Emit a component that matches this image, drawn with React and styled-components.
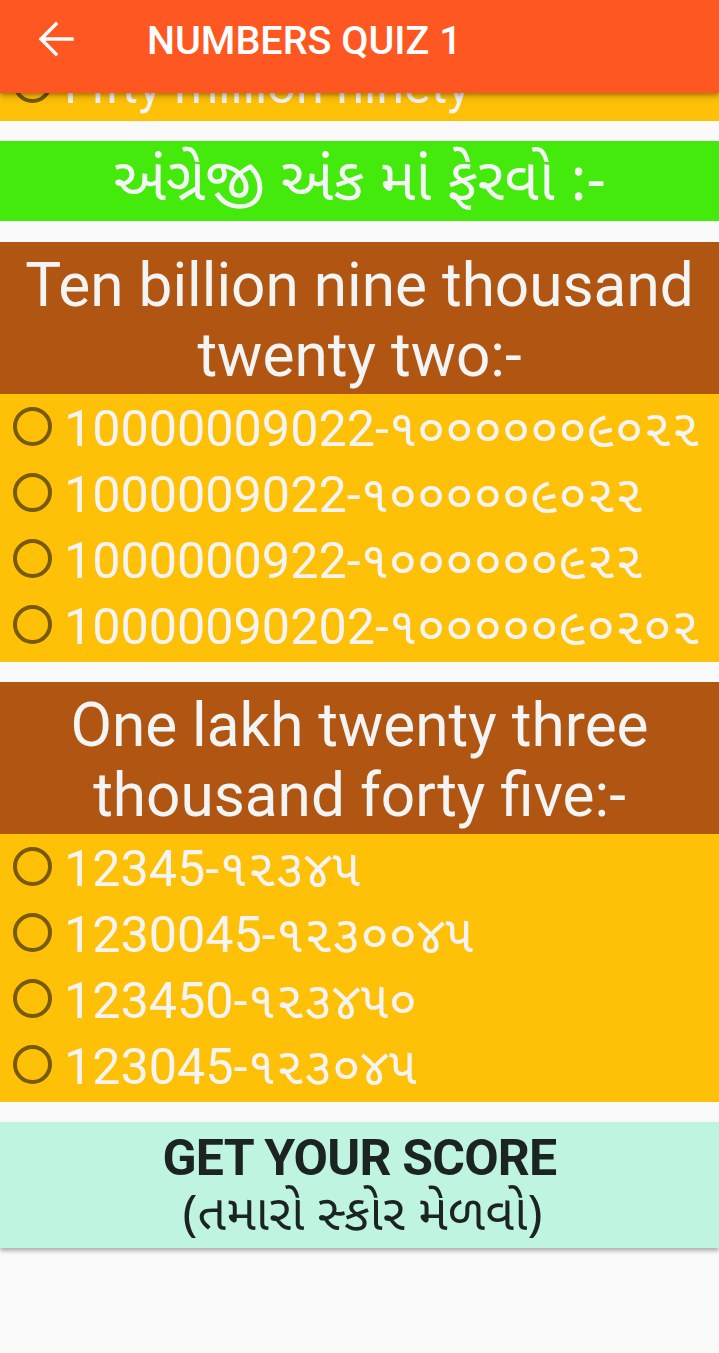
import React from "react";
import styled, { createGlobalStyle } from "styled-components";

const GlobalStyle = createGlobalStyle`
  html, body {
    margin: 0;
    padding: 0;
    background: #fafafa;
  }
  body {
    font-family: Roboto, "Noto Sans Gujarati", "Noto Sans", "DejaVu Sans", sans-serif;
  }
  * { box-sizing: border-box; }
`;

const Screen = styled.div`
  position: relative;
  width: 719px;
  height: 1353px;
  overflow: hidden;
  background: #fafafa;
`;

const AppBar = styled.header`
  position: absolute;
  top: 0;
  left: 0;
  right: 0;
  height: 93px;
  background: #ff5722;
  box-shadow: 0 2px 4px rgba(0, 0, 0, 0.28), 0 4px 8px rgba(0, 0, 0, 0.14);
  z-index: 2;
`;

const Toolbar = styled.div`
  height: 78px;
  display: flex;
  align-items: center;
  padding-left: 33px;
`;

const BackButton = styled.button`
  width: 46px;
  height: 46px;
  padding: 0;
  border: 0;
  background: transparent;
  display: flex;
  align-items: center;
  justify-content: center;
  margin-right: 68px;
`;

const Title = styled.h1`
  margin: 0;
  color: #ffffff;
  font-family: Roboto, sans-serif;
  font-weight: 500;
  font-size: 39.5px;
  letter-spacing: 0;
  line-height: 1;
  padding-top: 4px;
`;

const Content = styled.main`
  display: flex;
  flex-direction: column;
  gap: 20px;
  padding-top: 51px;
`;

const Question = styled.section`
  display: flex;
  flex-direction: column;
`;

const Banner = styled.div`
  background: #44ea0b;
  height: 80px;
  display: flex;
  align-items: center;
  justify-content: center;
  color: #f4f5f5;
  font-family: "Noto Sans Gujarati", "Noto Sans", Roboto, sans-serif;
  font-size: 60px;
  line-height: 80px;
  white-space: nowrap;
  margin-bottom: 1px;
  padding-top: 8px;
`;

const Heading = styled.h2`
  margin: 0;
  background: #b15612;
  color: #f3f4f4;
  font-weight: 400;
  font-size: 60.3px;
  line-height: 70px;
  text-align: center;
  padding: 9px 10px 3px;
`;

const Options = styled.div`
  background: #ffc107;
  padding: 2px 0 2px;
  display: flex;
  flex-direction: column;
`;

const Option = styled.label`
  height: 66px;
  display: flex;
  align-items: center;
  padding-left: 13px;
  gap: 12px;
  color: #f4f4f4;
  font-size: 50.3px;
  line-height: 66px;
  white-space: nowrap;
`;

const Native = styled.span`
  font-size: 1.02em;
`;

const Radio = styled.span`
  flex: none;
  width: 39px;
  height: 39px;
  border-radius: 50%;
  border: 4.5px solid #765a04;
  margin-top: -6px;
`;

const ScoreButton = styled.button`
  border: 0;
  margin: 0;
  width: 100%;
  height: 126px;
  background: #bff4e1;
  color: #1c2421;
  box-shadow: 0 3px 4px rgba(0, 0, 0, 0.3);
  display: flex;
  flex-direction: column;
  align-items: center;
  justify-content: flex-start;
  padding: 9px 0 0;
  font-family: Roboto, "Noto Sans Gujarati", sans-serif;
`;

const ScoreLine = styled.span`
  font-size: 50px;
  font-weight: 700;
  line-height: 55px;
  letter-spacing: -0.8px;
`;

const ScoreSub = styled.span`
  font-size: 50px;
  font-weight: 400;
  line-height: 56px;
  font-family: "Noto Sans Gujarati", Roboto, sans-serif;
  padding-left: 6px;
  margin-top: 4px;
`;

const BackArrow = () => (
  <svg width="46" height="46" viewBox="0 0 46 46" fill="none">
    <path
      d="M39 23H8.5M23 8L8 23l15 15"
      stroke="#ffffff"
      strokeWidth="3.4"
      strokeLinecap="square"
    />
  </svg>
);

const questions = [
  {
    title: "Ten billion nine thousand twenty two:-",
    options: [
      ["10000009022-", "૧૦૦૦૦૦૦૯૦૨૨"],
      ["1000009022-", "૧૦૦૦૦૦૯૦૨૨"],
      ["1000000922-", "૧૦૦૦૦૦૦૯૨૨"],
      ["10000090202-", "૧૦૦૦૦૦૯૦૨૦૨"],
    ],
  },
  {
    title: "One lakh twenty three thousand forty five:-",
    options: [
      ["12345-", "૧૨૩૪૫"],
      ["1230045-", "૧૨૩૦૦૪૫"],
      ["123450-", "૧૨૩૪૫૦"],
      ["123045-", "૧૨૩૦૪૫"],
    ],
  },
];

export default function App() {
  return (
    <>
      <GlobalStyle />
      <Screen>
        <AppBar>
          <Toolbar>
            <BackButton aria-label="back">
              <BackArrow />
            </BackButton>
            <Title>NUMBERS QUIZ 1</Title>
          </Toolbar>
        </AppBar>
        <Content>
          <Options>
            <Option>
              <Radio />
              Fifty million ninety
            </Option>
          </Options>
          <Banner>અંગ્રેજી અંક માં ફેરવો :-</Banner>
          {questions.map((q) => (
            <Question key={q.title}>
              <Heading>{q.title}</Heading>
              <Options>
                {q.options.map(([en, gu]) => (
                  <Option key={en}>
                    <Radio />
                    <span>
                      {en}
                      <Native>{gu}</Native>
                    </span>
                  </Option>
                ))}
              </Options>
            </Question>
          ))}
          <ScoreButton>
            <ScoreLine>GET YOUR SCORE</ScoreLine>
            <ScoreSub>(તમારો સ્કોર મેળવો)</ScoreSub>
          </ScoreButton>
        </Content>
      </Screen>
    </>
  );
}
